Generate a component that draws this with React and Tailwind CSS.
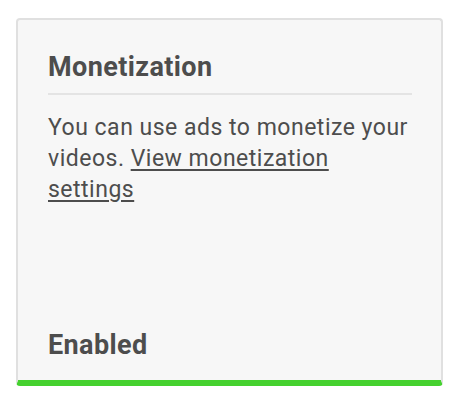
const App = () => {
  return (
    <div className="min-h-screen bg-white pl-4 pt-[18px] font-['Roboto',sans-serif]">
      <div className="flex h-[368px] w-[427px] flex-col rounded-[4px] border-2 border-b-[6px] border-[#e0e0e0] border-b-[#45d12f] bg-[#f7f7f7] pl-[30px] pr-[29px] pt-[31px] pb-[19px] text-[#4d4d4d]">
        <h2 className="text-[27px] font-bold leading-[32px] tracking-[0.4px]">Monetization</h2>
        <div className="mt-[10px] h-[2px] bg-[#e4e4e4]" />
        <p className="mt-[17px] text-[23px] leading-[31px] tracking-[0.5px]">
          You can use ads to monetize your videos.{' '}
          <a href="#" className="underline underline-offset-[3px]">
            View monetization settings
          </a>
        </p>
        <div className="mt-auto text-[27px] font-bold leading-[32px] tracking-[0.4px]">Enabled</div>
      </div>
    </div>
  )
}

export default App
